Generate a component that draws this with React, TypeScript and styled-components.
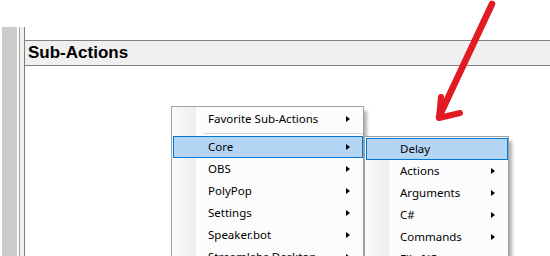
import React from 'react';
import styled, { createGlobalStyle } from 'styled-components';

const GlobalStyle = createGlobalStyle`
  html, body {
    margin: 0;
    padding: 0;
    background: #ffffff;
  }
  body {
    width: 550px;
    height: 256px;
    overflow: hidden;
  }
`;

type Entry = { label?: string; sub?: boolean; active?: boolean; sep?: boolean };

const coreMenu: Entry[] = [
  { label: 'Favorite Sub-Actions', sub: true },
  { sep: true },
  { label: 'Core', sub: true, active: true },
  { label: 'OBS', sub: true },
  { label: 'PolyPop', sub: true },
  { label: 'Settings', sub: true },
  { label: 'Speaker.bot', sub: true },
  { label: 'Streamlabs Desktop', sub: true },
  { label: 'Twitch', sub: true },
];

const subMenu: Entry[] = [
  { label: 'Delay', active: true },
  { label: 'Actions', sub: true },
  { label: 'Arguments', sub: true },
  { label: 'C#', sub: true },
  { label: 'Commands', sub: true },
  { label: 'File I/O', sub: true },
  { label: 'Globals', sub: true },
];

const Window = styled.div`
  position: relative;
  width: 550px;
  height: 256px;
  display: flex;
  flex-direction: column;
  overflow: hidden;
  background: #ffffff;
`;

const TopGap = styled.div`
  height: 27px;
  flex-shrink: 0;
`;

const Body = styled.div`
  flex: 1;
  display: flex;
  padding-left: 2px;
`;

const SideStrip = styled.div`
  width: 15px;
  background: #cccccc;
  margin-right: 2px;
`;

const Frame = styled.div`
  flex: 1;
  display: flex;
  border-left: 1px solid #a0a0a0;
  padding-left: 4px;
  background: #f0f0f0;
`;

const Pane = styled.div`
  flex: 1;
  display: flex;
  flex-direction: column;
  border-left: 1px solid #808080;
  background: #ffffff;
`;

const TopPane = styled.div`
  height: 13px;
`;

const Header = styled.div`
  height: 24px;
  border-top: 1px solid #828282;
  border-bottom: 1px solid #828282;
  background: #f0f0f0;
  display: flex;
  align-items: center;
  padding-left: 3px;
  font-family: 'Liberation Sans', Arial, sans-serif;
  font-weight: bold;
  font-size: 17px;
  color: #000000;
`;

const Content = styled.div`
  flex: 1;
`;

const Menu = styled.div<{ $left: number; $top: number; $width: number }>`
  position: absolute;
  left: ${p => p.$left}px;
  top: ${p => p.$top}px;
  width: ${p => p.$width}px;
  box-sizing: border-box;
  border: 1px solid #a0a0a0;
  background: #fcfcfc;
  padding: 1px 0 2px 0;
  box-shadow: 4px 4px 3px -1px rgba(0, 0, 0, 0.3);
  font-family: 'Noto Sans', 'Open Sans', sans-serif;
  font-size: 11.5px;
  color: #000000;
`;

const ImageMargin = styled.div`
  position: absolute;
  left: 0;
  top: 0;
  bottom: 0;
  width: 24px;
  background: linear-gradient(to right, #fbfbfb, #eeeeee);
`;

const Item = styled.div<{ $active?: boolean; $indent: number }>`
  position: relative;
  height: 22px;
  box-sizing: border-box;
  margin: 0 0 0 1px;
  display: flex;
  align-items: center;
  padding-left: ${p => p.$indent}px;
  padding-right: 12px;
  padding-bottom: 1px;
  border: 1px solid ${p => (p.$active ? '#0078d7' : 'transparent')};
  background: ${p => (p.$active ? '#b4d6f4' : 'transparent')};
  white-space: nowrap;
`;

const Label = styled.span`
  flex: 1;
`;

const Arrow = styled.span`
  width: 0;
  height: 0;
  border-top: 3.5px solid transparent;
  border-bottom: 3.5px solid transparent;
  border-left: 4px solid #000000;
`;

const Separator = styled.div<{ $indent: number }>`
  position: relative;
  height: 6px;
  margin-left: ${p => p.$indent}px;
  display: flex;
  align-items: center;
  &::after {
    content: '';
    flex: 1;
    border-top: 1px solid #d4d4d4;
  }
`;

const Annotation = styled.svg`
  position: absolute;
  left: 0;
  top: 0;
  pointer-events: none;
`;

const ContextMenu = ({
  items,
  left,
  top,
  width,
  indent,
}: {
  items: Entry[];
  left: number;
  top: number;
  width: number;
  indent: number;
}) => (
  <Menu $left={left} $top={top} $width={width}>
    <ImageMargin />
    {items.map((it, i) =>
      it.sep ? (
        <Separator key={i} $indent={32} />
      ) : (
        <Item key={i} $active={it.active} $indent={indent}>
          <Label>{it.label}</Label>
          {it.sub && <Arrow />}
        </Item>
      )
    )}
  </Menu>
);

export default function App() {
  return (
    <>
      <GlobalStyle />
      <Window>
        <TopGap />
        <Body>
          <SideStrip />
          <Frame>
            <Pane>
              <TopPane />
              <Header>Sub-Actions</Header>
              <Content />
            </Pane>
          </Frame>
        </Body>
        <ContextMenu items={coreMenu} left={171} top={106} width={193} indent={34} />
        <ContextMenu items={subMenu} left={364} top={136} width={145} indent={33} />
        <Annotation width={550} height={256} viewBox="0 0 550 256">
          <g fill="none" stroke="#e21b22" strokeLinecap="round" strokeLinejoin="round">
            <path d="M492 4 L439 117" strokeWidth={6.5} />
            <path d="M441 97 L439 118 L460 113" strokeWidth={6} />
          </g>
        </Annotation>
      </Window>
    </>
  );
}
